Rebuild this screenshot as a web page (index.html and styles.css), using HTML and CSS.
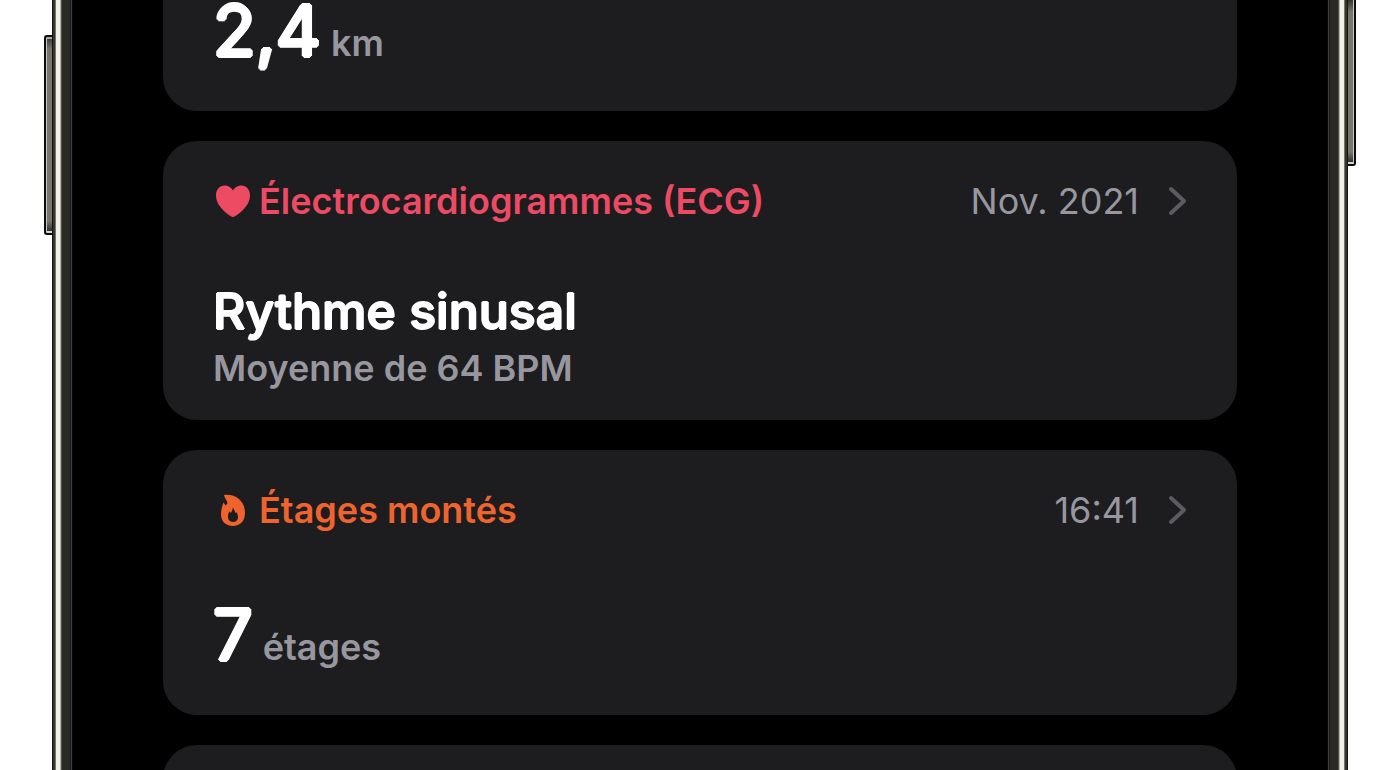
FILE: index.html
```html
<!DOCTYPE html>
<html lang="fr">
  <head>
    <meta charset="UTF-8" />
    <meta name="viewport" content="width=device-width, initial-scale=1.0" />
    <title>Résumé</title>
    <link rel="stylesheet" href="styles.css" />
  </head>
  <body>
    <div class="phone">
      <span class="side-button side-button-left"></span>
      <span class="side-button side-button-right"></span>
      <span class="rail rail-left"></span>
      <main class="screen">
        <section class="card card-metric card-distance">
          <p class="metric">
            <span class="number">2,4</span>
            <span class="unit">km</span>
          </p>
        </section>

        <section class="card">
          <header class="card-header heart">
            <svg class="icon" viewBox="0 0 36 36" aria-hidden="true">
              <path
                d="M18 34C16.800 34 1 25 1 12.400C1 6.500 4.700 2.500 9.800 2.500C13.300 2.500 16.500 4.800 18 7.500C19.500 4.800 22.700 2.500 26.200 2.500C31.300 2.500 35 6.500 35 12.400C35 25 19.200 34 18 34Z"
              />
            </svg>
            <h2>Électrocardiogrammes (ECG)</h2>
            <a class="details" href="#ecg">
              <time datetime="2021-11">Nov. 2021</time>
              <svg class="chevron" viewBox="0 0 18 30" aria-hidden="true">
                <path d="M2 3L15 15L2 27" />
              </svg>
            </a>
          </header>
          <p class="result">Rythme sinusal</p>
          <p class="average">Moyenne de 64 BPM</p>
        </section>

        <section class="card card-metric">
          <header class="card-header activity">
            <svg class="icon" viewBox="0 0 36 36" aria-hidden="true">
              <path
                fill-rule="evenodd"
                d="M9 3C20 1.500 30 8.500 30 21C30 29 25 34 18 34C10.500 34 6 29 6 22.500C6 18 7 14.500 8.500 10.500L10.700 13.500C11.500 12.700 12 12 12.500 11.300C12 8 9.500 6.500 9 3ZM17.800 15.500C17.800 18 16.800 19.300 15.800 21L14.600 19.300C13.500 21 13 22.800 13 24.800C13 28 15 30 18 30C21 30 23 28 23 25C23 22.800 22.300 21.300 21 20L20.200 21.200C19.800 19 19.100 17 17.800 15.500Z"
              />
            </svg>
            <h2>Étages montés</h2>
            <a class="details" href="#etages">
              <time datetime="16:41">16:41</time>
              <svg class="chevron" viewBox="0 0 18 30" aria-hidden="true">
                <path d="M2 3L15 15L2 27" />
              </svg>
            </a>
          </header>
          <p class="metric">
            <span class="number">7</span>
            <span class="unit">étages</span>
          </p>
        </section>

        <section class="card card-next"></section>
      </main>
      <span class="rail rail-right"></span>
    </div>
  </body>
</html>
```
FILE: styles.css
```css
* {
  box-sizing: border-box;
}

body {
  margin: 0;
  background-color: #fff;
  font-family: Inter, "Liberation Sans", sans-serif;
  font-size: 36px;
  line-height: 44px;
  color: #98979f;
  overflow: hidden;
}

h2,
p {
  margin: 0;
}

/* Phone body */
.phone {
  position: relative;
  display: flex;
  height: 100vh;
  margin: 0 52px;
  background-color: #000;
}

.rail {
  flex: none;
  width: 21px;
  background: linear-gradient(
    to right,
    #15150f 0 1px,
    #35352f 1px 3px,
    #77766f 3px 4px,
    #f4f1ea 4px 8px,
    #b5b3ac 8px 9px,
    #50504a 9px 10px,
    #2a2924 10px 18px,
    #17191a 18px 19px,
    #3b3f40 19px 20px,
    #080808 20px 21px
  );
}

.rail-right {
  transform: scaleX(-1);
}

.side-button {
  position: absolute;
  width: 8px;
  border: 2px solid #0b0b0b;
  background: linear-gradient(
    #34332f,
    #77756f 12px,
    #77756f calc(100% - 12px),
    #24231f
  );
}

.side-button-left {
  top: 35px;
  left: -8px;
  height: 200px;
  border-right: 0;
  border-radius: 3px 0 0 3px;
  box-shadow: inset 1px 0 #c8c6c0, inset 0 2px #aaa8a1, inset 0 -2px #d8d5ce;
}

.side-button-right {
  top: 0;
  right: -8px;
  height: 166px;
  border-top: 0;
  border-left: 0;
  border-radius: 0 0 3px 0;
  box-shadow: inset -1px 0 #c8c6c0, inset 0 -2px #d8d5ce;
}

/* Health cards */
.screen {
  flex: 1;
  display: flex;
  flex-direction: column;
  gap: 30px;
  padding: 0 90px;
  overflow: hidden;
}

.card {
  flex: none;
  padding: 38px 50px 30px;
  border-radius: 34px;
  background-color: #1d1d1f;
}

.card-metric {
  padding-bottom: 46px;
}

.card-distance {
  padding-top: 0;
  border-radius: 0 0 34px 34px;
}

.card-next {
  min-height: 265px;
}

.card-header {
  display: flex;
  align-items: center;
  margin-bottom: 58px;
}

.card-metric .card-header {
  margin-bottom: 72px;
}

.card-header h2 {
  margin-left: 8px;
  font-size: 36px;
  font-weight: 600;
}

.heart {
  color: #ed4b64;
}

.activity {
  color: #ef642e;
}

.icon {
  width: 36px;
  height: 36px;
  margin-left: 2px;
  fill: currentColor;
}

.details {
  display: flex;
  align-items: center;
  gap: 30px;
  margin-left: auto;
  color: #98979f;
  text-decoration: none;
}

.chevron {
  width: 18px;
  height: 30px;
  fill: none;
  stroke: #5b5b60;
  stroke-width: 4;
  stroke-linecap: round;
  stroke-linejoin: round;
}

/* The shadows thicken the strokes and round their ends */
.result {
  margin-bottom: 5px;
  color: #fff;
  font-size: 50px;
  font-weight: 500;
  line-height: 60px;
  text-shadow: 1px 0 #fff, -1px 0 #fff, 0 1px #fff, 0 -1px #fff;
}

.average,
.unit {
  font-weight: 600;
}

.metric {
  display: flex;
  align-items: baseline;
  gap: 10px;
}

.number {
  color: #fff;
  font-size: 70px;
  font-weight: 400;
  line-height: 61px;
  text-shadow: 2px 0 #fff, -2px 0 #fff, 0 2px #fff, 0 -2px #fff,
    1px 1px #fff, -1px 1px #fff, 1px -1px #fff, -1px -1px #fff;
}
```
